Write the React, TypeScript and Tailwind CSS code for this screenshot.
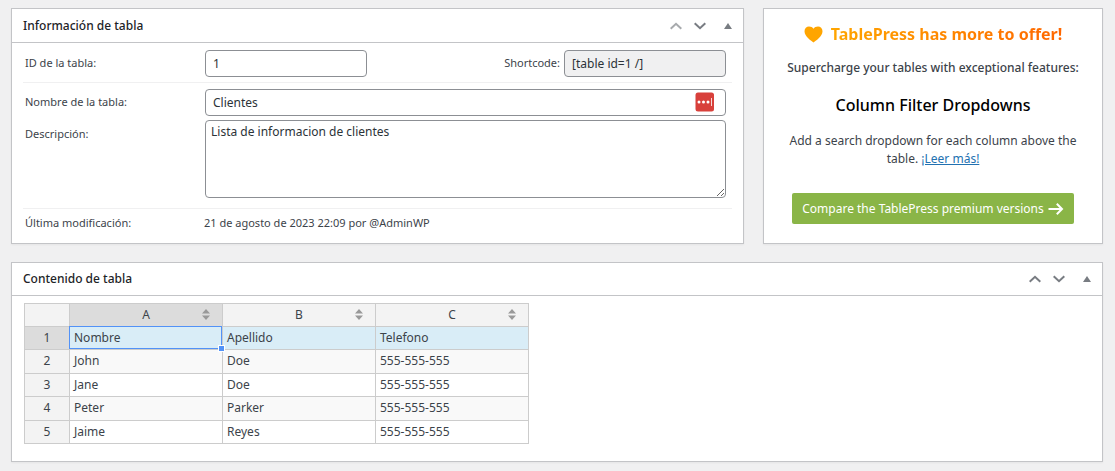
import { useState } from 'react'
import type { ReactNode } from 'react'

const HEADERS = ['A', 'B', 'C']

const ROWS = [
  ['Nombre', 'Apellido', 'Telefono'],
  ['John', 'Doe', '555-555-555'],
  ['Jane', 'Doe', '555-555-555'],
  ['Peter', 'Parker', '555-555-555'],
  ['Jaime', 'Reyes', '555-555-555'],
]

const FIELD = 'block rounded border border-[#8c8f94] text-xs text-[#2c3338]'

function Chevron({ up }: { up?: boolean }) {
  return (
    <svg width="12" height="8" viewBox="0 0 12 8" fill="none" stroke="currentColor" strokeWidth="2">
      <path d={up ? 'M0.7 6.8 6 1.8l5.3 5' : 'M0.7 1.2 6 6.2l5.3-5'} />
    </svg>
  )
}

function Panel({ title, first, children }: { title: string; first?: boolean; children: ReactNode }) {
  const [open, setOpen] = useState(true)

  return (
    <section className="min-w-0 flex-1 bg-white border border-[#c3c4c7] shadow-xs">
      <div className={`flex items-center px-[11px] ${first ? 'h-[34px]' : 'h-[33px]'} ${open ? 'border-b border-[#c3c4c7]' : ''}`}>
        <h2 className="flex-1 text-xs font-medium text-[#1d2327]">{title}</h2>
        <div className="flex items-center text-[#787c82]">
          <button type="button" aria-label="Subir" disabled={first} className="mr-3 disabled:text-[#a7aaad]">
            <Chevron up />
          </button>
          <button type="button" aria-label="Bajar" className="mr-[18px]">
            <Chevron />
          </button>
          <button type="button" aria-label="Alternar panel" aria-expanded={open} onClick={() => setOpen(!open)}>
            <svg width="8" height="6" viewBox="0 0 8 6" fill="currentColor" className={open ? '' : 'rotate-180'}>
              <path d="M4 0 8 6H0z" />
            </svg>
          </button>
        </div>
      </div>
      {open && children}
    </section>
  )
}

function TableInfo() {
  return (
    <Panel title="Información de tabla" first>
      <div className="px-[11px] text-[11px] text-[#3c434a]">
        <div className="flex items-center pt-[7px] pb-[5px] pl-0.5 pr-1.5 border-b border-[#f0f0f1]">
          <label htmlFor="table-id" className="w-[180px] shrink-0">ID de la tabla:</label>
          <input id="table-id" defaultValue="1" className={`${FIELD} w-[162px] h-[27px] px-[7px]`} />
          <label htmlFor="shortcode" className="ml-auto mr-1">Shortcode:</label>
          <input
            id="shortcode" readOnly value="[table id=1 /]"
            className={`${FIELD} w-[162px] h-[27px] px-[7px] bg-[#f0f0f1]`}
          />
        </div>

        <div className="pt-1.5 pb-2.5 pl-0.5 pr-1.5 border-b border-[#f0f0f1]">
          <div className="flex items-center">
            <label htmlFor="table-name" className="w-[180px] shrink-0">Nombre de la tabla:</label>
            <div className="relative flex-1">
              <input id="table-name" defaultValue="Clientes" className={`${FIELD} w-full h-[27px] px-[7px]`} />
              <button type="button" aria-label="Rellenar" className="absolute right-[11px] top-[3px]">
                <svg width="20" height="20" viewBox="0 0 20 20">
                  <rect x="0.5" y="0.5" width="18.5" height="19" rx="2.5" fill="#d8403b" />
                  <g fill="#fff">
                    <circle cx="4" cy="10" r="1.5" />
                    <circle cx="8.5" cy="10" r="1.5" />
                    <circle cx="13" cy="10" r="1.5" />
                    <rect x="16" y="6" width="1" height="8" opacity="0.8" />
                  </g>
                </svg>
              </button>
            </div>
          </div>
          <div className="flex items-start mt-1">
            <label htmlFor="table-description" className="w-[180px] shrink-0 pt-1.5">Descripción:</label>
            <textarea
              id="table-description" defaultValue="Lista de informacion de clientes"
              className={`${FIELD} flex-1 h-[78px] px-[5px] py-0.5 leading-[18px] resize`}
            />
          </div>
        </div>

        <div className="flex items-center h-[34px] pl-0.5 pb-1.5">
          <span className="w-[179px] shrink-0">Última modificación:</span>
          <span>21 de agosto de 2023 22:09 por @AdminWP</span>
        </div>
      </div>
    </Panel>
  )
}

function Promo() {
  return (
    <aside className="w-[340px] shrink-0 bg-white border border-[#c3c4c7] shadow-xs px-4 pt-[13px] text-center text-xs text-[#3c434a]">
      <h3 className="flex items-center justify-center gap-2 h-6 text-base font-bold">
        <svg width="19" height="17" viewBox="0 0 19 17" fill="#ffa500">
          <path d="M9.5 16.5C7.5 15 0.5 10.8 0.5 5.3 0.5 2.4 2.6 0.5 5 0.5c2 0 3.6 0.9 4.5 2.3C10.4 1.4 12 0.5 14 0.5c2.4 0 4.5 1.9 4.5 4.8 0 5.5-7 9.7-9 11.2z" />
        </svg>
        <span className="bg-gradient-to-r from-[#ffa500] to-[#ff6600] bg-clip-text text-transparent">
          TablePress has more to offer!
        </span>
      </h3>
      <p className="mt-[13px] font-medium leading-[18px]">Supercharge your tables with exceptional features:</p>
      <h4 className="mt-4 text-base leading-6 font-medium text-black">Column Filter Dropdowns</h4>
      <p className="mt-[15px] leading-[18px]">
        Add a search dropdown for each column above the table.{' '}
        <a href="#leer-mas" className="text-[#2271b1] underline">¡Leer más!</a>
      </p>
      <a
        href="#premium"
        className="inline-flex items-center gap-1 h-[31px] mt-[25px] px-2.5 rounded-xs bg-[#8ab547] text-white"
      >
        Compare the TablePress premium versions
        <svg width="16" height="12" viewBox="0 0 16 12" fill="none" stroke="currentColor" strokeWidth="2">
          <path d="M0.5 6h13.5M8.8 0.8 14 6l-5.2 5.2" />
        </svg>
      </a>
    </aside>
  )
}

function TableContent() {
  const [selected, setSelected] = useState({ row: 0, col: 0 })

  return (
    <Panel title="Contenido de tabla">
      <div className="px-3 pt-[7px] pb-[17px]">
        <table className="table-fixed w-[505px] border-collapse text-xs text-[#3c434a]">
          <colgroup>
            <col className="w-[45px]" />
            <col />
            <col />
            <col />
          </colgroup>
          <thead>
            <tr className="h-[23px] bg-[#f3f3f3]">
              <td className="border border-[#ccc]" />
              {HEADERS.map((h, i) => (
                <th
                  key={h}
                  scope="col"
                  className={`relative p-0 border border-[#ccc] font-normal ${selected.col === i ? 'bg-[#dcdcdc]' : ''}`}
                >
                  {h}
                  <button type="button" aria-label={`Ordenar por ${h}`} className="absolute right-3 top-[5px] text-[#999]">
                    <svg width="8" height="11" viewBox="0 0 8 11" fill="currentColor">
                      <path d="M4 0 8 4.5H0zM0 6.5h8L4 11z" />
                    </svg>
                  </button>
                </th>
              ))}
            </tr>
          </thead>
          <tbody>
            {ROWS.map((row, r) => (
              <tr key={r} className={`h-[23px] even:h-6 ${r === 0 ? 'bg-[#d9edf7]' : 'even:bg-[#f9f9f9]'}`}>
                <th
                  scope="row"
                  className={`pt-0 pb-px px-0 border border-[#ccc] font-normal ${selected.row === r ? 'bg-[#dcdcdc]' : 'bg-[#f3f3f3]'}`}
                >
                  {r + 1}
                </th>
                {row.map((cell, c) => (
                  <td
                    key={c}
                    onClick={() => setSelected({ row: r, col: c })}
                    className="relative pt-0 pb-px px-1 border border-[#ccc]"
                  >
                    {cell}
                    {selected.row === r && selected.col === c && (
                      <>
                        <span className="absolute -top-px -left-px right-0 bottom-0 border border-[#5292f7]" />
                        <span className="absolute z-10 -right-[3px] -bottom-[3px] size-[7px] bg-[#5292f7] border border-white" />
                      </>
                    )}
                  </td>
                ))}
              </tr>
            ))}
          </tbody>
        </table>
      </div>
    </Panel>
  )
}

export default function App() {
  return (
    <main className="min-h-screen bg-[#f0f0f1] pt-2 pl-[11px] pr-3 font-['Noto_Sans','Open_Sans',sans-serif]">
      <div className="flex gap-[19px] mb-[18px]">
        <TableInfo />
        <Promo />
      </div>
      <TableContent />
    </main>
  )
}
